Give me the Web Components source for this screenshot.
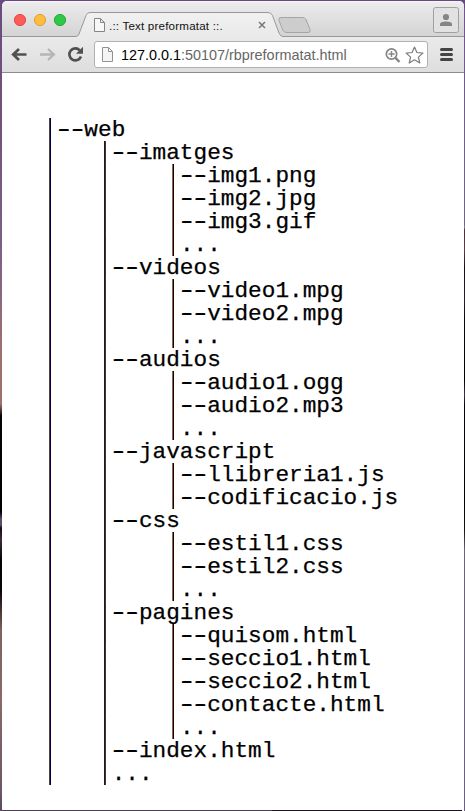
<!DOCTYPE html>
<html lang="ca">
<head>
<meta charset="utf-8">
<title>.:: Text preformatat ::.</title>
<style>
html,body{margin:0;height:100%;overflow:hidden}
body{font-family:"Liberation Sans",Arial,sans-serif}
</style>
</head>
<body>
<browser-window>
  <tab-strip slot="tabs"><span>.:: Text preformatat ::.</span></tab-strip>
  <nav-bar slot="nav"><span slot="host">127.0.0.1</span><span slot="path">:50107/rbpreformatat.html</span></nav-bar>
  <file-tree></file-tree>
</browser-window>
<script>
function define(name, html, setup){
  const t=document.createElement('template');
  t.innerHTML=html;
  customElements.define(name, class extends HTMLElement{
    constructor(){
      super();
      this.attachShadow({mode:'open'}).append(t.content.cloneNode(true));
      if(setup) setup(this.shadowRoot);
    }
  });
}

define('browser-window', `
<style>
:host{display:block;box-sizing:border-box;width:465px;height:811px;padding:1px 1px 1px 2px;
 background:
  linear-gradient(#69497f,#69497f) 0 0/465px 8px no-repeat,
  linear-gradient(#4a3f50,#4a3f50) 2px 810px/270px 1px no-repeat,
  linear-gradient(#1c141f,#1c141f) 272px 810px/190px 1px no-repeat,
  linear-gradient(#6a4b80 0,#72527c 120px,#7c6088 250px,#a0706f 350px,#a06f70 404px,#060306 416px,#000 512px,#5a4a6c 519px,#5a4a6c 525px,#140c12 528px,#3a2c3c 540px,#050305 560px,#0a0505 590px,#806060 630px,#8c6868 700px,#6c5766 790px,#584a60 811px) 0 0/2px 811px no-repeat,
  linear-gradient(#745491 0,#6e6680 225px,#8a8898 227px,#4b3038 230px,#5a3d47 250px,#150c12 268px,#281e29 300px,#08060a 320px,#000 380px,#3b3443 395px,#06040a 405px,#000 500px,#15120f 530px,#6c6376 550px,#6c6080 811px) 464px 0/1px 811px no-repeat}
main{display:flex;flex-direction:column;height:100%;background:#fff;border-radius:5px 5px 3px 3px;overflow:hidden}
</style>
<main><slot name="tabs"></slot><slot name="nav"></slot><slot></slot></main>`);

define('tab-strip', `
<style>
:host{display:grid;height:36px;flex:none;background:linear-gradient(#f7f7f7 0,#ebebeb 2px,#d4d4d4 35px)}
:host>*{grid-area:1/1}
svg{display:block}
.row{display:flex;align-items:center;height:24px;margin:12px 0 0 107px;font-size:11.6px;letter-spacing:.19px;color:#111;white-space:pre;z-index:1}
</style>
<svg width="462" height="36" viewBox="2 1 462 36">
 <defs><linearGradient id="g" x2="0" y2="1"><stop stop-color="#f1f1f1"/><stop offset="1" stop-color="#e9e9e9"/></linearGradient></defs>
 <path d="M281 17.500H302Q305 17.500 306 19.500L310 29.500Q311 32.500 308 32.500H287Q284 32.500 283 30.500L279 20.500Q278 17.500 281 17.500Z" fill="#cdcdcd" stroke="#a5a5a5"/>
 <path d="M2 36.500H76Q78 36.500 79 34L86 15.500Q87 12.500 90 12.500H268Q271 12.500 272.500 15.500L279 33Q280.500 36.500 283 36.500H464V38H2Z" fill="url(#g)" stroke="#989898"/>
 <circle cx="20" cy="20" r="5.600" fill="#fc5b57" stroke="#df4844"/>
 <circle cx="40" cy="20" r="5.600" fill="#fdbd41" stroke="#dfa032"/>
 <circle cx="60" cy="20" r="5.600" fill="#33c748" stroke="#27aa35"/>
 <path d="M94.500 18.500H100.500L104.500 22.500V31.500H94.500ZM100.500 18.500V22.500H104.500" fill="#f8f8f8" stroke="#858585"/>
 <path d="M259 22L265 28M265 22L259 28" stroke="#777" stroke-width="1.500"/>
 <rect x="433.500" y="7.500" width="25" height="25" rx="2" fill="#e2e2e2" stroke="#a0a0a0"/>
 <circle cx="446" cy="17" r="3.100" fill="#858585"/>
 <path d="M440 26V24Q440 21.500 446 21.500T452 24V26Z" fill="#858585"/>
</svg>
<div class="row"><slot></slot></div>`);

define('nav-bar', `
<style>
:host{display:flex;height:36px;flex:none;box-sizing:border-box;align-items:center;background:linear-gradient(#eaeaea,#dedede);border-bottom:1px solid #8c8c8c;padding-right:9px}
svg{display:block;flex:none}
.box{display:flex;align-items:center;box-sizing:border-box;width:334px;height:27px;border:1px solid #b1b1b1;border-radius:3px;background:#fff;padding:0 3px 0 6px;font-size:14.400px;white-space:pre}
.url{flex:1;padding-left:7px;color:#666}
.host{color:#000}
.menu{margin-left:10px}
</style>
<svg width="92" height="35" viewBox="2 37 92 35" fill="none">
 <path d="M26.500 54.500H14M19 49L13.200 54.500L19 60" stroke="#505050" stroke-width="2.700"/>
 <path d="M40 54.500H53M48 49L53.800 54.500L48 60" stroke="#b5b5b5" stroke-width="2.400"/>
 <path d="M79.800 50.300A6 6 0 1 0 81 56.500" stroke="#505050" stroke-width="2.600"/>
 <path d="M83 46.800V53.800H76Z" fill="#505050"/>
</svg>
<div class="box">
 <svg width="13" height="17" viewBox="0 0 13 17"><path d="M1.500 1.500H7.500L11.500 5.500V15.500H1.500ZM7.500 1.500V5.500H11.500" fill="#f5f5f5" stroke="#929292"/></svg>
 <div class="url"><span class="host"><slot name="host"></slot></span><slot name="path"></slot></div>
 <svg width="40" height="22" viewBox="384 43 40 22" fill="none">
  <circle cx="391.500" cy="53" r="5.200" stroke="#858585" stroke-width="1.700"/>
  <path d="M388.500 53H394.500M391.500 50V56" stroke="#858585" stroke-width="1.400"/>
  <path d="M395.200 56.700L399.500 61" stroke="#858585" stroke-width="2.400"/>
  <path d="M414.500 46L416.900 51.500L422.900 52.100L418.400 56.100L419.800 62L414.500 58.800L409.200 62L410.600 56.100L406.100 52.100L412.100 51.500Z" stroke="#7c7c7c" stroke-width="1.200" stroke-linejoin="round"/>
 </svg>
</div>
<svg class="menu" width="15" height="35" viewBox="438 37 15 35"><path d="M441.500 49.500H451.500M441.500 54.500H451.500M441.500 59.500H451.500" stroke="#444" stroke-width="3" stroke-linecap="round"/></svg>`);

const rows=`|--web
|   |--imatges
|   |    |--img1.png
|   |    |--img2.jpg
|   |    |--img3.gif
|   |    |...
|   |--videos
|   |    |--video1.mpg
|   |    |--video2.mpg
|   |    |...
|   |--audios
|   |    |--audio1.ogg
|   |    |--audio2.mp3
|   |    |...
|   |--javascript
|   |    |--llibreria1.js
|   |    |--codificacio.js
|   |--css
|   |    |--estil1.css
|   |    |--estil2.css
|   |    |...
|   |--pagines
|   |    |--quisom.html
|   |    |--seccio1.html
|   |    |--seccio2.html
|   |    |--contacte.html
|   |    |...
|   |--index.html
|   |...`.split('\n');

define('file-tree', `
<style>
:host{display:block;padding-top:45px;color:#000;font:22.740px/24px "Liberation Mono","Courier New",monospace;-webkit-text-stroke:.25px #000}
pre{margin:0;font:inherit}
.row{height:23px;padding-left:41.400px;
 background:
  linear-gradient(90deg,#54403c 50%,#00004c 50%) 47px 0/2px 23px no-repeat,
  linear-gradient(90deg,#400008 50%,#45454c 50%) 102px 0/var(--w1,0) 23px no-repeat,
  linear-gradient(90deg,#a06034 50%,#08081c 50%) 170px 0/var(--w2,0) 23px no-repeat}
.d2,.d3{--w1:2px}
.d3{--w2:2px}
.bar{display:inline-block;height:23px;line-height:23px;vertical-align:top;-webkit-text-stroke:0;clip-path:inset(0 6px 0 6.600px)}
.b0{color:#00004c}
.b1{color:#30202c}
.b2{color:#08081c;clip-path:inset(0 6px 0 6.800px)}
.dash{-webkit-text-stroke:0;text-shadow:-1px 0,1px 0,-1.700px 0,1.700px 0}
</style>
<pre></pre>`, root=>{
  const pre=root.querySelector('pre');
  for(const line of rows){
    const row=document.createElement('div');
    let depth=0;
    for(const part of line.split(/(\||--)/)){
      if(!part) continue;
      if(part==='|'||part==='--'){
        const s=document.createElement('span');
        s.className=part==='|'?'bar b'+depth++:'dash';
        s.textContent=part;
        row.append(s);
      } else row.append(part);
    }
    row.className='row d'+depth;
    pre.append(row);
  }
});
</script>
</body>
</html>
